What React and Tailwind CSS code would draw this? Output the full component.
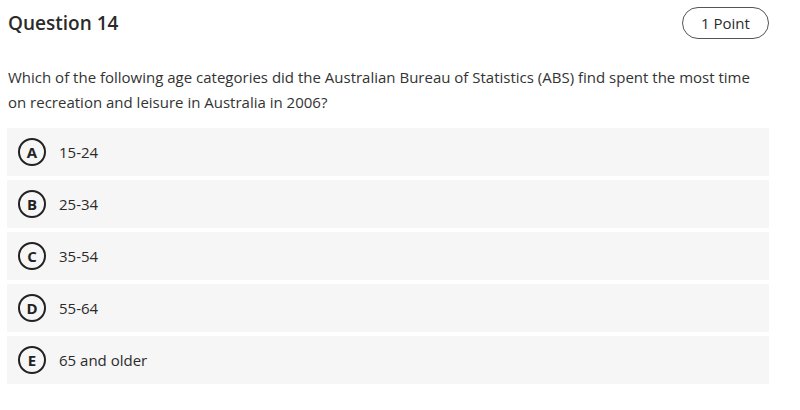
import React from 'react';

const options = [
    { key: 'A', label: '15-24' },
    { key: 'B', label: '25-34' },
    { key: 'C', label: '35-54' },
    { key: 'D', label: '55-64' },
    { key: 'E', label: '65 and older' },
];

export default function App() {
    return (
        <div className="w-[800px] h-[410px] bg-white text-[#333] font-['Open_Sans',sans-serif] pl-[7px] pr-[31px] pt-[7px]">
            <div className="flex items-center justify-between h-[32px]">
                <div className="pl-[1px] text-[19px] font-semibold text-[#2b2b2b]">Question 14</div>
                <div className="h-[32px] w-[87px] rounded-full border border-[#555] flex items-center justify-center text-[15px] text-[#2b2b2b]">1 Point</div>
            </div>
            <p className="mt-[26px] pl-[1px] text-[15px] leading-[25px] text-[#333]">
                Which of the following age categories did the Australian Bureau of Statistics (ABS) find spent the most time on recreation and leisure in Australia in 2006?
            </p>
            <div className="mt-[13px] flex flex-col gap-[4px]">
                {options.map(o => (
                    <div key={o.key} className="h-[48px] bg-[#f6f6f6] flex items-center pl-[11px]">
                        <div className="w-[28px] h-[28px] rounded-full border-2 border-[#222] flex items-center justify-center text-[15px] leading-none font-bold text-[#222]">{o.key}</div>
                        <div className="ml-[13px] text-[15px] text-[#2b2b2b]">{o.label}</div>
                    </div>
                ))}
            </div>
        </div>
    );
}
